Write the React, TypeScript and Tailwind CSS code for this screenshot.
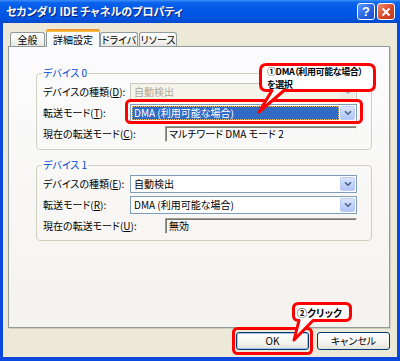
import React from "react";

const FONT = "[font-family:'Noto_Sans_CJK_JP','Noto_Sans_CJK_SC',sans-serif] [font-feature-settings:'palt']";

function Chevron({ disabled }: { disabled?: boolean }) {
  return (
    <svg width="8" height="6" viewBox="0 0 8 6">
      <path d="M1 1.2 L4 4.2 L7 1.2" fill="none" stroke={disabled ? "#B0B4C0" : "#4D6185"} strokeWidth="1.6" />
    </svg>
  );
}

function Combo({ text, selected, disabled }: { text: string; selected?: boolean; disabled?: boolean }) {
  return (
    <div
      className={
        disabled
          ? "flex-1 h-[18px] border border-[#C9C7BA] bg-[#F5F4EA] flex p-[1px]"
          : "flex-1 h-[18px] border border-[#7F9DB9] bg-white flex p-[1px]"
      }
    >
      <div
        className={
          selected
            ? "flex-1 flex items-center pl-[2px] mr-[1px] bg-[#316AC5] text-white text-[10px] leading-none outline-1 outline-dotted outline-[#E8C070] -outline-offset-1"
            : disabled
            ? "flex-1 flex items-center pl-[2px] text-[#ACA899] text-[10px] leading-none"
            : "flex-1 flex items-center pl-[2px] text-black text-[10px] leading-none"
        }
      >
        {text}
      </div>
      <div
        className={
          disabled
            ? "w-[15px] rounded-[2px] bg-[#EEEDE5] flex items-center justify-center"
            : "w-[15px] rounded-[2px] border border-[#BACCF5] bg-[linear-gradient(to_bottom,#DCE6FD,#C2D3FB_50%,#B2C7F8)] flex items-center justify-center"
        }
      >
        <Chevron disabled={disabled} />
      </div>
    </div>
  );
}

function Field({ text }: { text: string }) {
  return (
    <div className="flex-1 h-[16px] border-t border-l border-[#9B9A8E] border-r border-b border-r-[#F6F5F0] border-b-[#F6F5F0] shadow-[inset_1px_1px_0_#7A7970] flex items-center pl-[3px] text-[10px] leading-none text-black whitespace-pre">
      {text}
    </div>
  );
}

function Label({ children, w }: { children: React.ReactNode; w: string }) {
  return <div className={w + " text-[10px] leading-none text-black whitespace-nowrap"}>{children}</div>;
}

function U({ c }: { c: string }) {
  return <span className="underline underline-offset-1">{c}</span>;
}

function Group({ title, children, top }: { title: string; children: React.ReactNode; top: string }) {
  return (
    <fieldset className={top + " border border-[#D0D0BF] rounded-[4px] px-[6px] pr-[14px]"}>
      <legend className="-ml-[1px] px-[1px] text-[10px] leading-[12px] text-[#0046D5]">{title}</legend>
      {children}
    </fieldset>
  );
}

export default function App() {
  return (
    <div className={FONT + " relative w-[400px] h-[361px] overflow-hidden bg-[#0A48DE] flex flex-col"}>
      {/* Title bar */}
      <div className="h-[23px] shrink-0 flex items-center pl-[6px] pr-[5px] bg-[linear-gradient(to_bottom,#3D8EF8_0%,#0A62EC_12%,#0058E6_45%,#0054E0_80%,#0048CC_100%)]">
        <div className="flex-1 text-white font-bold text-[11px] leading-none [text-shadow:1px_1px_0_#0A1F7A] whitespace-nowrap">
          セカンダリ IDE チャネルのプロパティ
        </div>
        <div className="w-[18px] h-[17px] rounded-[3px] border border-white bg-[linear-gradient(to_bottom_right,#5C9BFF,#2560E0_60%,#1C4FC8)] flex items-center justify-center text-white font-bold text-[13px] leading-none [font-family:'Liberation_Sans',sans-serif]">
          ?
        </div>
        <div className="ml-[2px] w-[18px] h-[17px] rounded-[3px] border border-white bg-[linear-gradient(to_bottom_right,#F08A6A,#D8482A_55%,#C03518)] flex items-center justify-center">
          <svg width="10" height="10" viewBox="0 0 10 10">
            <path d="M1.5 1.5 L8.5 8.5 M8.5 1.5 L1.5 8.5" stroke="white" strokeWidth="2" />
          </svg>
        </div>
      </div>

      {/* Body */}
      <div className="flex-1 mx-[3px] mb-[4px] bg-[#ECE9D8] flex flex-col pt-[6px] pl-[5px] pr-[7px]">
        {/* Tabs */}
        <div className="relative z-10 h-[18px] flex items-end pl-[2px]">
          <div className="w-[35px] h-[14px] mb-[1px] rounded-t-[3px] border border-b-0 border-[#919B9C] bg-[linear-gradient(to_bottom,#FFFFFF,#F3F3EF_60%,#E8E7E0)] flex items-center justify-center text-[10px] leading-none">
            全般
          </div>
          <div className="ml-[1px] w-[54px] h-[18px] rounded-t-[3px] border border-t-0 border-b-0 border-[#919B9C] bg-[#FCFCFE] flex flex-col">
            <div className="h-[3px] -mx-[1px] rounded-t-[3px] bg-[linear-gradient(to_bottom,#E68B2C,#FFC73C)]" />
            <div className="flex-1 flex items-center justify-center text-[10px] leading-none">詳細設定</div>
          </div>
          <div className="w-[38px] h-[14px] mb-[1px] rounded-t-[3px] border border-b-0 border-[#919B9C] bg-[linear-gradient(to_bottom,#FFFFFF,#F3F3EF_60%,#E8E7E0)] flex items-center justify-center text-[10px] leading-none">
            ドライバ
          </div>
          <div className="ml-[1px] w-[38px] h-[14px] mb-[1px] rounded-t-[3px] border border-b-0 border-[#919B9C] bg-[linear-gradient(to_bottom,#FFFFFF,#F3F3EF_60%,#E8E7E0)] flex items-center justify-center text-[10px] leading-none">
            リソース
          </div>
        </div>

        {/* Panel */}
        <div className="-mt-[1px] h-[282px] border border-[#919B9C] bg-[linear-gradient(to_bottom,#FCFCFE,#F4F3EE)] shadow-[1px_1px_0_#D0CEBF] pl-[27px] pr-[17px] flex flex-col">
          <Group title="デバイス 0" top="mt-[20px]">
            <div className="pt-[4px] pb-[6px] flex flex-col gap-[3px]">
              <div className="h-[18px] flex items-center">
                <Label w="w-[87px]">デバイスの種類(<U c="D" />):</Label>
                <Combo text="自動検出" disabled />
              </div>
              <div className="h-[18px] flex items-center">
                <Label w="w-[87px]">転送モード(<U c="T" />):</Label>
                <Combo text="DMA (利用可能な場合)" selected />
              </div>
              <div className="h-[18px] flex items-center">
                <Label w="w-[122px]">現在の転送モード(<U c="C" />):</Label>
                <Field text="マルチワード DMA モード 2" />
              </div>
            </div>
          </Group>
          <Group title="デバイス 1" top="mt-[9px]">
            <div className="pt-[4px] pb-[5px] flex flex-col gap-[3px]">
              <div className="h-[18px] flex items-center">
                <Label w="w-[87px]">デバイスの種類(<U c="E" />):</Label>
                <Combo text="自動検出" />
              </div>
              <div className="h-[18px] flex items-center">
                <Label w="w-[87px]">転送モード(<U c="R" />):</Label>
                <Combo text="DMA (利用可能な場合)" />
              </div>
              <div className="h-[18px] flex items-center">
                <Label w="w-[122px]">現在の転送モード(<U c="U" />):</Label>
                <Field text="無効" />
              </div>
            </div>
          </Group>
        </div>

        {/* Buttons */}
        <div className="mt-[4px] flex justify-end gap-[8px]">
          <div className="w-[73px] h-[18px] rounded-[3px] border border-[#003C74] bg-[linear-gradient(to_bottom,#FFFFFF,#F4F4F0_60%,#E3E2DA)] shadow-[inset_0_0_0_1px_#A8C4F0] flex items-center justify-center text-[10px] leading-none">
            OK
          </div>
          <div className="w-[73px] h-[18px] rounded-[3px] border border-[#003C74] bg-[linear-gradient(to_bottom,#FFFFFF,#F4F4F0_60%,#E3E2DA)] flex items-center justify-center text-[10px] leading-none">
            キャンセル
          </div>
        </div>
      </div>

      {/* Annotation overlay */}
      <svg className="absolute left-0 top-0 pointer-events-none" width="400" height="361" viewBox="0 0 400 361">
        <rect x="126.5" y="100.5" width="235" height="22" rx="4" fill="none" stroke="#FF0000" strokeWidth="3" />
        <rect x="233.5" y="328.5" width="78" height="25" rx="4" fill="none" stroke="#FF0000" strokeWidth="3" />
        <path
          d="M266.5 64.5 H368.5 Q374.5 64.5 374.5 70.5 V84.5 Q374.5 90.5 368.5 90.5 H284 L259 112 L272 90.5 H266.5 Q260.5 90.5 260.5 84.5 V70.5 Q260.5 64.5 266.5 64.5 Z"
          fill="white"
          stroke="#FF0000"
          strokeWidth="3"
          strokeLinejoin="round"
        />
        <path
          d="M298.5 303.5 H345.5 Q350.5 303.5 350.5 308.5 V315.5 Q350.5 320.5 345.5 320.5 H313 L294 340 L299 320.5 H298.5 Q293.5 320.5 293.5 315.5 V308.5 Q293.5 303.5 298.5 303.5 Z"
          fill="white"
          stroke="#FF0000"
          strokeWidth="3"
          strokeLinejoin="round"
        />
      </svg>
      <div className="absolute left-[267px] top-[65px] w-[104px] text-[9px] leading-[13px] font-bold text-black tracking-[-0.4px]">
        ①DMA（利用可能な場合）<br />を選択
      </div>
      <div className="absolute left-[297px] top-[307px] text-[10px] leading-[11px] font-bold text-black whitespace-nowrap">
        ②クリック
      </div>
    </div>
  );
}
